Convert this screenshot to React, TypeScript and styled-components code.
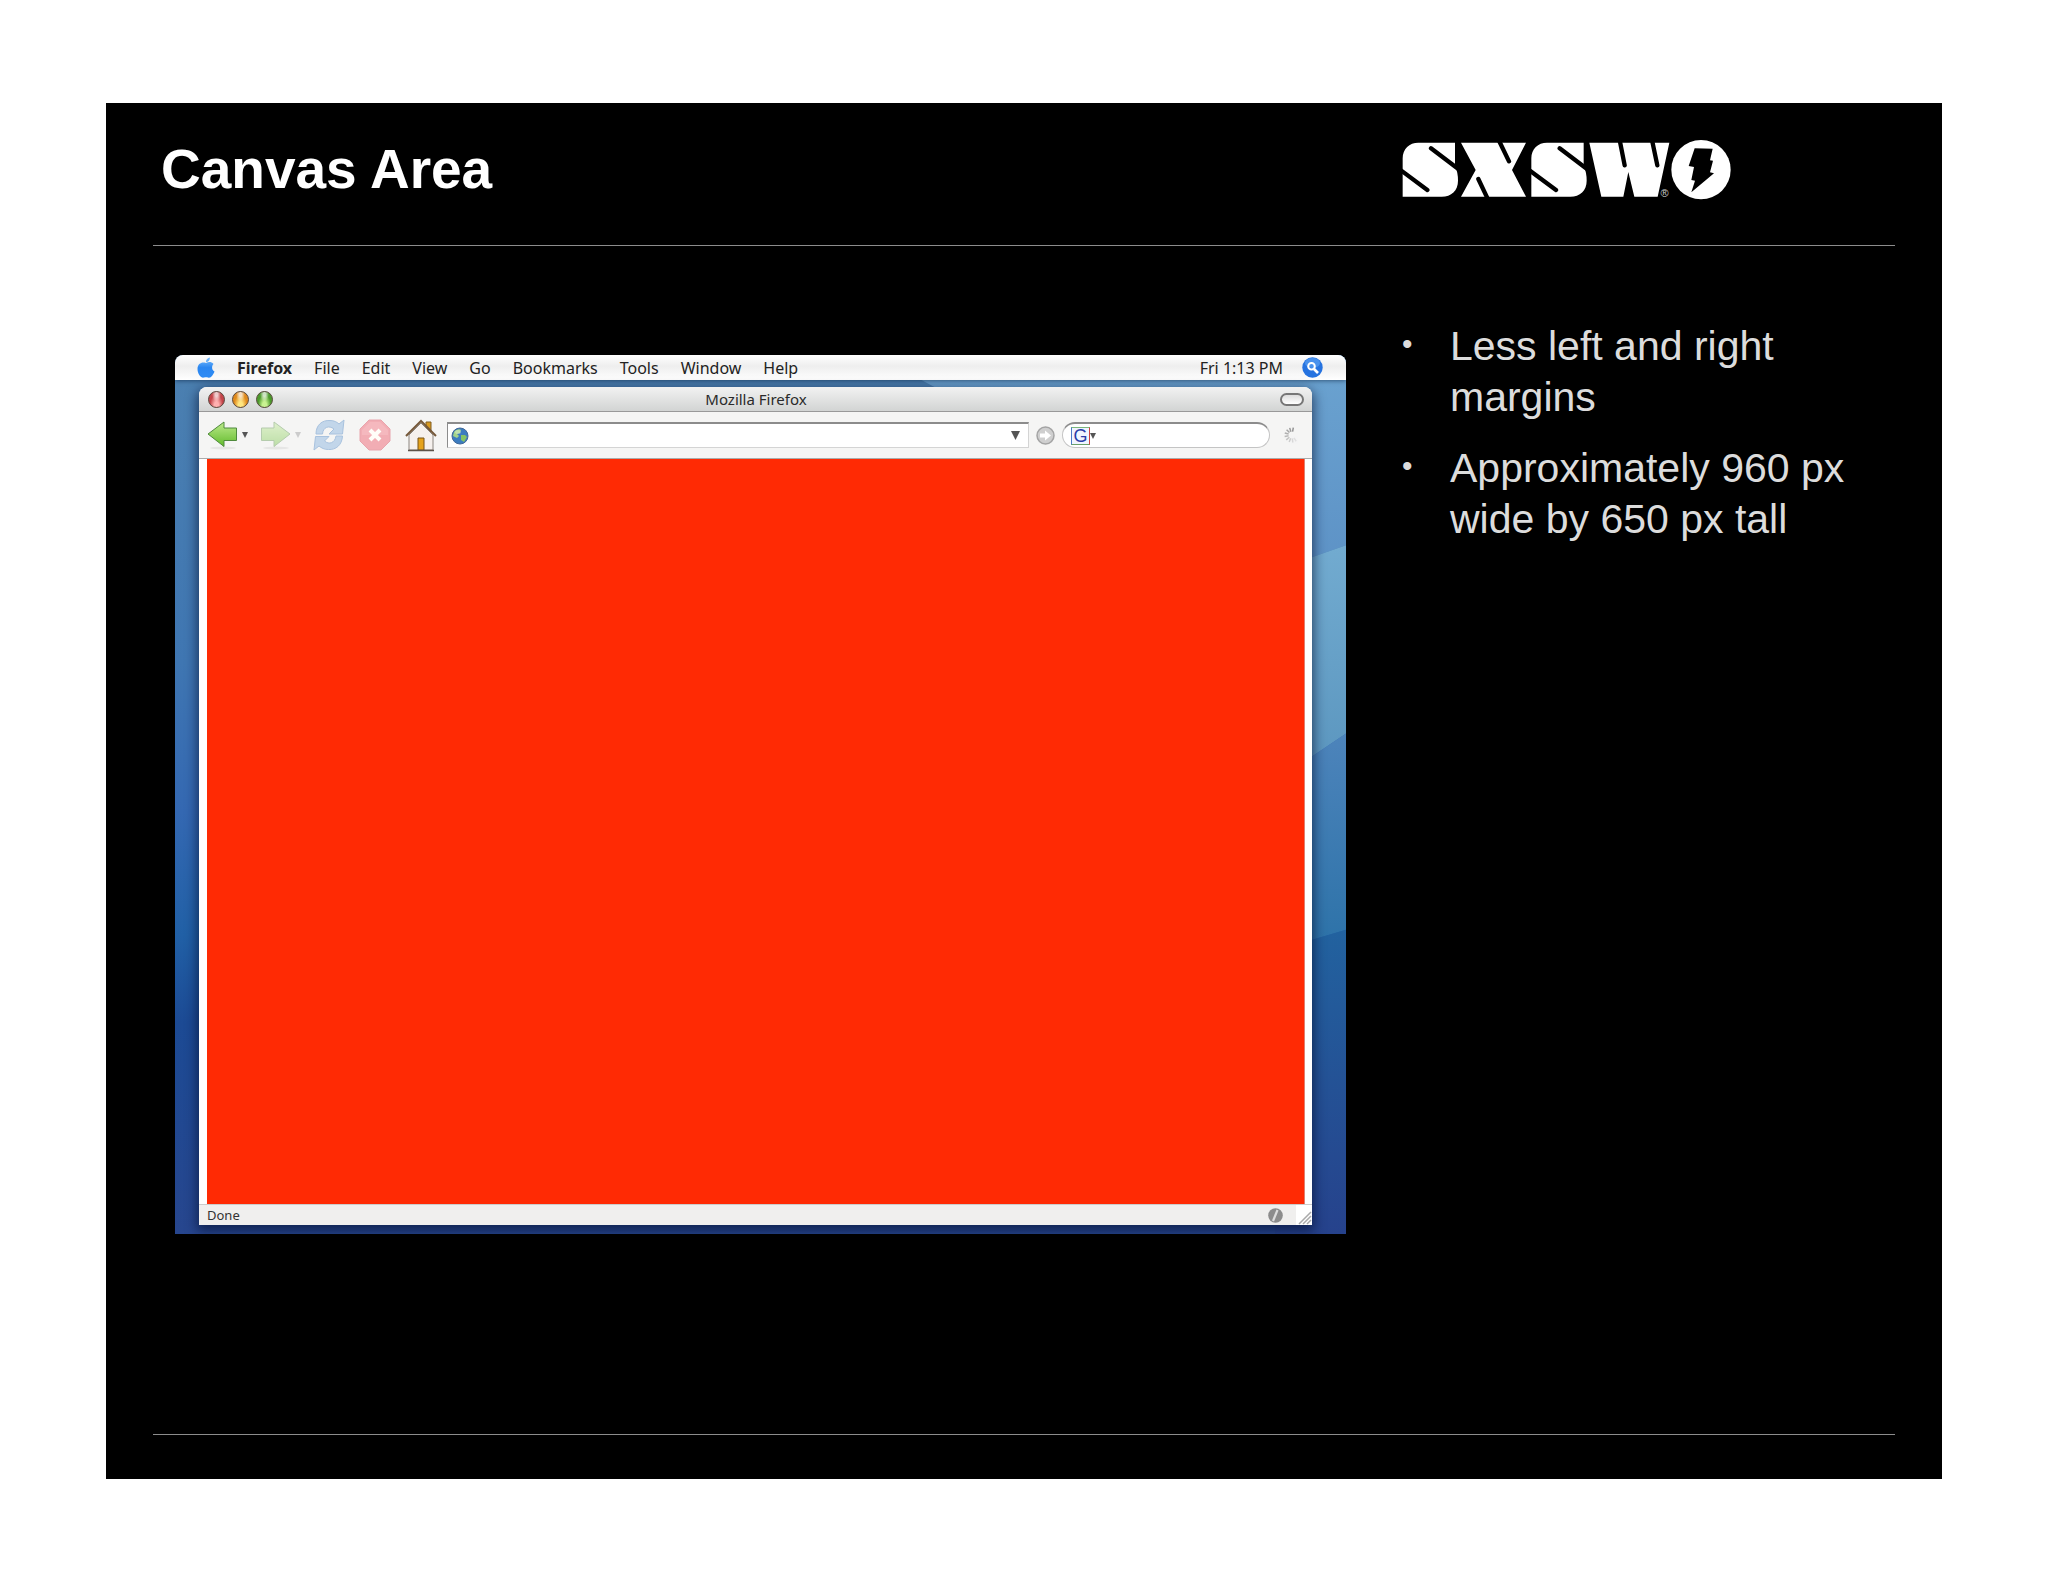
import React from 'react';
import styled, { createGlobalStyle } from 'styled-components';

const GlobalStyle = createGlobalStyle`
  *, *::before, *::after { box-sizing: border-box; }
  body { margin: 0; background: #fff; }
`;

const system = `'Noto Sans', 'Open Sans', sans-serif`;

const Page = styled.div`
  min-height: 100vh;
  display: flex;
  padding: 103px 106px;
  font-family: 'Liberation Sans', Arial, sans-serif;
`;

const Slide = styled.main`
  flex: 1;
  display: flex;
  flex-direction: column;
  padding: 0 47px 44px;
  background: #000;
  color: #dcdcdc;
`;

const columns = `
  display: grid;
  grid-template-columns: minmax(0, 1247fr) minmax(0, 495fr);
`;

const Header = styled.header`
  ${columns}
  align-items: center;
  height: 143px;
  padding-bottom: 10px;
  border-bottom: 1px solid #8c8c8c;
`;

const Title = styled.h1`
  margin: 0;
  padding-left: 8px;
  font-size: 55px;
  line-height: 64px;
  color: #fff;
`;

const LogoArt = styled.svg`
  display: block;
  width: 334px;
  height: 62px;
`;

const Body = styled.section`
  ${columns}
  flex: 1;
  align-items: start;
  border-bottom: 1px solid #8c8c8c;
`;

const Notes = styled.ul`
  margin: 0;
  padding: 75px 24px 0 0;
  display: grid;
  gap: 20px;
  list-style: none;
`;

const Note = styled.li`
  display: grid;
  grid-template-columns: 50px minmax(0, 1fr);
  font-size: 41px;
  line-height: 51px;

  &::before {
    content: '•';
    font-size: 30px;
    line-height: 46px;
    padding-left: 2px;
  }
`;

const Desktop = styled.figure`
  position: relative;
  isolation: isolate;
  display: flex;
  flex-direction: column;
  aspect-ratio: 1171 / 879;
  margin: 109px 54px 48px 22px;
  border-radius: 8px 8px 0 0;
  overflow: hidden;
`;

const WallpaperArt = styled.svg`
  position: absolute;
  inset: 0;
  z-index: -1;
  width: 100%;
  height: 100%;
`;

const MenuBar = styled.nav`
  display: flex;
  align-items: center;
  height: 25px;
  padding: 0 23px 0 22px;
  background: linear-gradient(#fff, #eee 45%, #fff);
  box-shadow: 0 1px 4px rgba(0, 20, 50, 0.5);
  font-family: ${system};
`;

const MenuItem = styled.button<{ $strong?: boolean }>`
  padding: 0;
  margin-right: 22px;
  border: 0;
  background: none;
  font: ${(p) => (p.$strong ? 700 : 400)} 16px/24px ${system};
  color: #222;
`;

const Clock = styled.time`
  margin-left: auto;
  margin-right: 19px;
  font-size: 16px;
  line-height: 24px;
  color: #222;
`;

const IconButton = styled.button<{ $gap?: number }>`
  display: flex;
  align-items: center;
  flex: none;
  padding: 0;
  margin: 0 ${(p) => p.$gap ?? 0}px 0 0;
  border: 0;
  background: none;
`;

const Window = styled.div`
  flex: 1;
  display: flex;
  flex-direction: column;
  margin: 7px 34px 9px 24px;
  border-radius: 8px 8px 0 0;
  background: #fff;
  box-shadow: 0 4px 12px 2px rgba(0, 10, 40, 0.6);
`;

const TitleBar = styled.div`
  display: grid;
  grid-template-columns: 1fr auto 1fr;
  align-items: center;
  height: 25px;
  padding: 0 8px 0 9px;
  border-bottom: 1px solid #999;
  border-radius: 8px 8px 0 0;
  background: linear-gradient(#f2f2f2, #d2d4d3);
`;

const Lights = styled.div`
  display: flex;
  gap: 7px;
`;

const Light = styled.button<{ $tone: string; $glow: string }>`
  width: 17px;
  height: 17px;
  padding: 0;
  border: 1px solid #5a4a40;
  border-radius: 50%;
  background:
    radial-gradient(ellipse at 50% 15%, rgba(255, 255, 255, 0.7) 0 12%, transparent 42%),
    radial-gradient(ellipse at 50% 90%, ${(p) => p.$glow} 0 20%, transparent 60%),
    ${(p) => p.$tone};
`;

const WindowTitle = styled.span`
  font: 15px/24px ${system};
  color: #2a2a2a;
`;

const Pill = styled.button`
  justify-self: end;
  width: 24px;
  height: 13px;
  padding: 0;
  border: 2px solid #777;
  border-radius: 7px;
  background: linear-gradient(#ddd, #fff);
`;

const Toolbar = styled.div`
  display: flex;
  align-items: center;
  height: 47px;
  padding: 0 11px 0 8px;
  border-bottom: 1px solid #aaa;
  background: #f5f5f4;
`;

const AddressBox = styled.div`
  flex: 1;
  display: flex;
  align-items: center;
  min-width: 0;
  height: 26px;
  padding: 0 8px 0 3px;
  margin-right: 7px;
  border: 1px solid #d4d4d4;
  border-top: 2px solid #8c8c8c;
  border-left-color: #8c8c8c;
  background: #fff;
`;

const SearchBox = styled.div`
  display: flex;
  align-items: center;
  width: 208px;
  height: 26px;
  padding: 0 12px 0 8px;
  margin-right: 13px;
  border: 1px solid #c4c4c4;
  border-top: 2px solid #8c8c8c;
  border-radius: 13px;
  background: #fff;
`;

const Field = styled.input`
  flex: 1;
  min-width: 0;
  padding: 0 6px;
  border: 0;
  outline: 0;
  background: transparent;
  font: 15px/20px ${system};
`;

const Badge = styled.span`
  display: grid;
  place-items: center;
  width: 19px;
  height: 18px;
  border: 1px solid;
  border-color: #7cb87c #cc4444 #6aa06a #4a7ac8;
  background: #f0f5ff;
  font: 18px/16px 'Liberation Sans', Arial, sans-serif;
  color: #2a3ca8;
`;

const Canvas = styled.div`
  flex: 1;
  margin: 0 7px 0 8px;
  background: #ff2a04;
  border-right: 1px solid #e08070;
`;

const StatusBar = styled.div`
  display: flex;
  align-items: center;
  height: 21px;
  padding-left: 8px;
  border-top: 1px solid #ccc;
  background: #f0efee;
`;

const Status = styled.span`
  flex: 1;
  font: 13px/18px ${system};
  color: #333;
`;

const glyph = '#fff';

function Logo() {
  const s = 'M85 68H195V140Q204 155 204 182C204 212 184 230 155 230H38V160Q38 140 38 115C38 86 58 68 85 68Z';
  return (
    <LogoArt viewBox="30 54 1002 186" role="img" aria-label="SXSW">
      <g fill={glyph}>
        <path d={s} />
        <path d={s} transform="translate(386 0)" />
        <path d="M213 68H408L366 150 408 230H213L257 150Z" />
        <path d="M598 68H838L803 230H733L715 156 700 230H634Z" />
        <circle cx="933" cy="149" r="89" />
      </g>
      <path
        d="M123 85 204 146M112 210 30 149M509 85 590 146M498 210 416 149M326 60 357 124M265 177 294 238M689 60 704 136M786 60 802 136"
        stroke="#000"
        strokeWidth="13"
        strokeLinecap="round"
      />
      <path d="M914 85 968 86 960 121 969 122 960 157 972 160 904 217 915 182 904 180 912 141 896 138Z" />
      <text x="824" y="230" fontSize="33" textAnchor="middle" fill="#ccc">®</text>
    </LogoArt>
  );
}

function Wallpaper() {
  const fades = [
    ['a', '#6ba3d0', '#5d92c6'],
    ['b', '#72abd0', '#5a95be'],
    ['c', '#4d84bb', '#2c72a8'],
    ['d', '#22629f', '#26428c'],
  ];
  return (
    <WallpaperArt viewBox="0 0 1171 878" preserveAspectRatio="none" aria-hidden="true">
      <defs>
        {fades.map(([id, from, to]) => (
          <linearGradient key={id} id={`wall-${id}`} x1="0" y1="0" x2="0" y2="1">
            <stop offset="0" stopColor={from} />
            <stop offset="1" stopColor={to} />
          </linearGradient>
        ))}
        <linearGradient id="wall-left" x1="0" y1="0" x2="0" y2="1">
          <stop offset="0" stopColor="#4c80b0" />
          <stop offset=".35" stopColor="#3f76b2" />
          <stop offset=".52" stopColor="#3468b2" />
          <stop offset=".66" stopColor="#2160a6" />
          <stop offset=".76" stopColor="#1c4a94" />
          <stop offset="1" stopColor="#27468e" />
        </linearGradient>
      </defs>
      <rect width="1171" height="878" fill="url(#wall-left)" />
      <path d="M700 0H1171V190L1100 215Z" fill="url(#wall-a)" />
      <path d="M1100 215 1171 190V378L1100 426Z" fill="url(#wall-b)" />
      <path d="M1100 426 1171 378V574L1100 595Z" fill="url(#wall-c)" />
      <path d="M1100 595 1171 574V878H1100Z" fill="url(#wall-d)" />
    </WallpaperArt>
  );
}

function Apple() {
  return (
    <svg width="18" height="22" viewBox="0 0 18 22" aria-hidden="true">
      <defs>
        <linearGradient id="apple" x1="0" y1="0" x2="0" y2="1">
          <stop offset="0" stopColor="#7cc0ff" />
          <stop offset=".5" stopColor="#2a86f0" />
          <stop offset="1" stopColor="#2f8cf5" />
        </linearGradient>
      </defs>
      <path
        fill="url(#apple)"
        d="M9 6C11 5 14 4 16.500 7 14.500 9 14.500 13 17.500 14.500 16 18 14 21.500 11 20.500 9.500 20 8.500 20 7 20.600 3.500 21.500 .5 16 .5 12 .5 6.500 5 4.500 9 6ZM9 5C9 2.500 10.500 1 13 .5 13 3 11.500 5 9 5Z"
      />
    </svg>
  );
}

function Spotlight() {
  return (
    <svg width="21" height="21" viewBox="0 0 21 21" aria-hidden="true">
      <circle cx="10.500" cy="10.500" r="10.200" fill="#2673e0" />
      <ellipse cx="10.500" cy="6" rx="7.500" ry="5" fill="#5aa0f2" opacity=".7" />
      <g fill="none" stroke="#fff" strokeWidth="2">
        <circle cx="9.500" cy="9.200" r="3.300" />
        <path d="m12 12 4 4" strokeWidth="2.600" />
      </g>
    </svg>
  );
}

function Arrow({ faded }: { faded?: boolean }) {
  return (
    <svg width="31" height="32" viewBox="0 0 31 32" aria-hidden="true">
      <defs>
        <linearGradient id="arrow" x1="0" y1="0" x2="0" y2="1">
          <stop offset="0" stopColor="#bdea8c" />
          <stop offset="1" stopColor="#62bb2c" />
        </linearGradient>
      </defs>
      <ellipse cx="16" cy="29" rx="13" ry="1.500" fill="#000" opacity=".06" />
      <path
        d="M1 15 17 3V9H29.500V21.500H17V27.500Z"
        transform={faded ? 'translate(31 0) scale(-1 1)' : undefined}
        fill="url(#arrow)"
        stroke="#4f8a3c"
        strokeLinejoin="round"
        opacity={faded ? 0.38 : 1}
      />
    </svg>
  );
}

function Caret({ size = 6, color = '#555' }: { size?: number; color?: string }) {
  return (
    <svg width={size} height={size} viewBox="0 0 6 6" aria-hidden="true">
      <path d="M0 0H6L3 6Z" fill={color} />
    </svg>
  );
}

function Reload() {
  return (
    <svg width="32" height="32" viewBox="0 0 32 32" aria-hidden="true">
      <g fill="#c2d6ea" stroke="#a8c2de" strokeLinejoin="round">
        <path d="M3 15C3 6 9 1 17 1.500 21 1.500 24 3 26 5L31 1 29.500 15H16L21 10C16 6 10 8 9.500 15Z" />
        <path d="M29.500 17C29 26 23 31 15.500 30.500 11 30.500 8.500 29 6 27L1 31 2.500 17.500H16L11.500 22C16 26 22 24 23 17Z" />
      </g>
    </svg>
  );
}

function Stop() {
  return (
    <svg width="32" height="32" viewBox="0 0 32 32" aria-hidden="true">
      <path d="M10 1H22L31 10V22L22 31H10L1 22V10Z" fill="#f2adb4" stroke="#e8a4ac" strokeLinejoin="round" />
      <path d="M3 16V11L11 3H21L29 11V16Z" fill="#f8c4c8" opacity=".5" />
      <path d="m11 11 10 10m0-10L11 21" stroke="#fffdf8" strokeWidth="4" />
    </svg>
  );
}

function Home() {
  return (
    <svg width="32" height="33" viewBox="0 0 32 33" aria-hidden="true">
      <path d="M21 3H26V13L21 8Z" fill="#d89a20" stroke="#805c20" />
      <path d="M4 16 16 4 28 16V31H4Z" fill="#f6f1ee" stroke="#8c8680" />
      <path d="M1 17 16 2 31 17" fill="none" stroke="#75583a" strokeWidth="2" />
      <path d="M13 31V19H19V31Z" fill="#e5a21c" stroke="#785218" />
      <path d="M3 31.500H29" stroke="#5c5248" strokeWidth="1.500" />
    </svg>
  );
}

function Globe() {
  return (
    <svg width="18" height="18" viewBox="0 0 18 18" aria-hidden="true">
      <circle cx="9" cy="9" r="8" fill="#3c7cc0" stroke="#406898" />
      <path d="M3 5C5 2 9 1.500 10 3L9 6 6 7 8 9 6 11 2 9Z" fill="#a4d488" />
      <path d="M10 8 14 8 16 10 13 15 10 13Z" fill="#86c464" />
      <ellipse cx="7" cy="5" rx="3" ry="2" fill="#fff" opacity=".3" />
    </svg>
  );
}

function Go() {
  return (
    <svg width="19" height="19" viewBox="0 0 19 19" aria-hidden="true">
      <circle cx="9.500" cy="9.500" r="8.500" fill="#cfcfcf" stroke="#a4a4a4" strokeWidth="1.500" />
      <path d="M4 7.500H9V4.500L15 9.500 9 14.500V11.500H4Z" fill="#fff" />
    </svg>
  );
}

function Spinner() {
  return (
    <svg width="18" height="18" viewBox="0 0 18 18" aria-hidden="true">
      {Array.from({ length: 9 }, (_, i) => (
        <path
          key={i}
          d="M9 1.500V5.500"
          stroke="#888"
          strokeWidth="1.500"
          opacity={0.9 - i * 0.09}
          transform={`rotate(${10 - i * 28} 9 9)`}
        />
      ))}
    </svg>
  );
}

function Secure() {
  return (
    <svg width="15" height="15" viewBox="0 0 15 15" aria-hidden="true">
      <circle cx="7.500" cy="7.500" r="7.300" fill="#8c8c8c" />
      <path d="M5 13 9.500 2" stroke="#ddd" strokeWidth="2.200" />
    </svg>
  );
}

function Grip() {
  return (
    <svg width="29" height="20" viewBox="0 0 29 20" aria-hidden="true">
      <path d="M13 0H29V20H13Z" fill="#fff" />
      <path d="M16 19 28 7M20 19 28 11M24 19 28 15" stroke="#aaa" strokeWidth="1.500" />
    </svg>
  );
}

const menus = ['File', 'Edit', 'View', 'Go', 'Bookmarks', 'Tools', 'Window', 'Help'];

export default function App() {
  return (
    <>
      <GlobalStyle />
      <Page>
        <Slide>
          <Header>
            <Title>Canvas Area</Title>
            <Logo />
          </Header>
          <Body>
            <Desktop>
              <Wallpaper />
              <MenuBar>
                <IconButton $gap={22} aria-label="Apple menu"><Apple /></IconButton>
                <MenuItem $strong>Firefox</MenuItem>
                {menus.map((name) => <MenuItem key={name}>{name}</MenuItem>)}
                <Clock>Fri 1:13 PM</Clock>
                <IconButton aria-label="Spotlight"><Spotlight /></IconButton>
              </MenuBar>
              <Window>
                <TitleBar>
                  <Lights>
                    <Light $tone="#c4454a" $glow="#ffb0b0" aria-label="Close" />
                    <Light $tone="#e08a1c" $glow="#ffe680" aria-label="Minimize" />
                    <Light $tone="#4c9a2c" $glow="#c8f290" aria-label="Zoom" />
                  </Lights>
                  <WindowTitle>Mozilla Firefox</WindowTitle>
                  <Pill aria-label="Toggle toolbar" />
                </TitleBar>
                <Toolbar>
                  <IconButton $gap={4} aria-label="Back"><Arrow /></IconButton>
                  <IconButton $gap={12} aria-label="Back history"><Caret /></IconButton>
                  <IconButton $gap={4} aria-label="Forward"><Arrow faded /></IconButton>
                  <IconButton $gap={12} aria-label="Forward history"><Caret color="#ccc" /></IconButton>
                  <IconButton $gap={14} aria-label="Reload"><Reload /></IconButton>
                  <IconButton $gap={14} aria-label="Stop"><Stop /></IconButton>
                  <IconButton $gap={10} aria-label="Home"><Home /></IconButton>
                  <AddressBox>
                    <Globe />
                    <Field aria-label="Address" />
                    <IconButton aria-label="Address history"><Caret size={9} /></IconButton>
                  </AddressBox>
                  <IconButton $gap={7} aria-label="Go"><Go /></IconButton>
                  <SearchBox>
                    <Badge>G</Badge>
                    <IconButton $gap={0} aria-label="Search engine"><Caret size={6} /></IconButton>
                    <Field aria-label="Search" />
                  </SearchBox>
                  <Spinner />
                </Toolbar>
                <Canvas />
                <StatusBar>
                  <Status>Done</Status>
                  <Secure />
                  <Grip />
                </StatusBar>
              </Window>
            </Desktop>
            <Notes>
              <Note>Less left and right margins</Note>
              <Note>Approximately 960 px wide by 650 px tall</Note>
            </Notes>
          </Body>
        </Slide>
      </Page>
    </>
  );
}
